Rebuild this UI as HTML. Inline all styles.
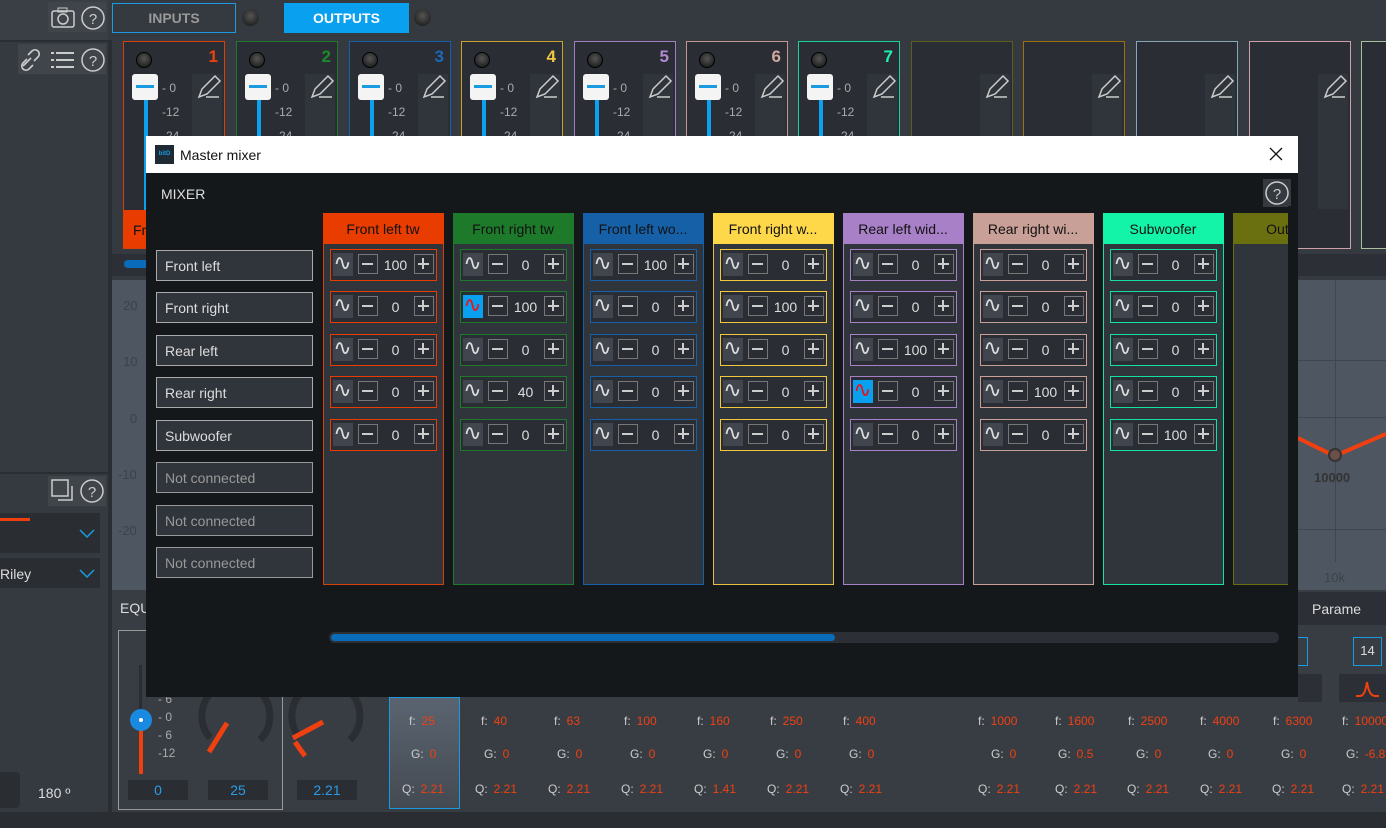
<!DOCTYPE html>
<html><head><meta charset="utf-8">
<style>
*{box-sizing:border-box;margin:0;padding:0}
body{width:1386px;height:828px;overflow:hidden;background:#353a41;font-family:"Liberation Sans",sans-serif;position:relative;color:#ddd}
.a{position:absolute}
.card{position:absolute;top:41px;width:102px;height:208px;border:1.5px solid;background:#2a2e34}
.card .led{position:absolute;left:12px;top:10px;width:16px;height:16px;border-radius:50%;background:radial-gradient(circle at 50% 40%,#555,#111);border:1px solid #000}
.card .num{position:absolute;right:6px;top:5px;font-weight:bold;font-size:17px}
.card .ed{position:absolute;left:68px;top:32px;width:30px;height:135px;background:#30353c}
.card .kn{position:absolute;left:8px;top:32px;width:26px;height:26px;background:#f4f4f4;border-radius:3px}
.card .kn:after{content:"";position:absolute;left:4px;top:11px;width:18px;height:3px;background:#1a9be0}
.card .ln{position:absolute;left:20px;top:58px;width:4px;height:120px;background:#0ea0f0}
.card .sc{position:absolute;left:38px;font-size:12px;color:#aaa}
.dlg{position:absolute;left:146px;top:136px;width:1152px;height:561px;background:#15181b;overflow:hidden}
.tb{position:absolute;left:0;top:0;width:1152px;height:37px;background:#fff;color:#111;font-size:14px}
.col{position:absolute;top:77px;width:121px;height:372px;border:1.5px solid;background:#30343b}
.hd{position:absolute;left:-1.5px;top:-1.5px;width:121px;height:31px;font-size:14px;color:#111;text-align:center;line-height:33px;white-space:nowrap;overflow:hidden}
.c{position:absolute;left:5.5px;width:107px;height:32px;border:1.5px solid;background:#2a2e34}
.c i{position:absolute;left:2px;top:3px;width:20px;height:23px;background:#41464e;color:#ddd;font-style:normal;font-family:"DejaVu Sans",sans-serif;font-size:22px;text-align:center;line-height:22px;overflow:hidden}
.c i.on{background:#0aa0f0;color:#f01010}
.c b{position:absolute;top:4px;width:20px;height:20px;border:1.5px solid #777}
.c b.m{left:27px}.c b.p{left:83px}
.c b:before{content:"";position:absolute;left:3px;top:7.5px;width:11px;height:2px;background:#ccc}
.c b.p:after{content:"";position:absolute;left:7.5px;top:3px;width:2px;height:11px;background:#ccc}
.c span{position:absolute;left:47px;width:36px;top:7px;text-align:center;font-size:14px;color:#ddd}
.lb{position:absolute;left:10px;width:157px;height:31px;border:1.5px solid #aaa;background:#30343b;font-size:14px;padding-left:8px;line-height:31px;color:#ddd}
.lb.n{color:#999;border-color:#999}
.fv{position:absolute;font-size:12px;color:#ccc}
.fv em{font-style:normal;color:#f04010;margin-left:6px}
</style></head><body>

<!-- left panel -->
<div class="a" style="left:0;top:0;width:108px;height:40px;background:#3a3f46"></div>
<div class="a" style="left:48px;top:2px;width:58px;height:30px;background:#40454c"></div>
<svg class="a" style="left:50px;top:5px" width="56" height="26"><rect x="2" y="6" width="22" height="16" rx="2" fill="none" stroke="#ccc" stroke-width="1.5"/><rect x="8" y="3" width="9" height="4" fill="none" stroke="#ccc"/><circle cx="13" cy="14" r="5" fill="none" stroke="#ccc" stroke-width="1.5"/><circle cx="43" cy="13" r="11" fill="none" stroke="#ccc" stroke-width="1.5"/><text x="43" y="19" font-size="15" fill="#ccc" text-anchor="middle" font-family="Liberation Sans">?</text></svg>
<div class="a" style="left:0;top:40px;width:108px;height:2px;background:#2a2e33"></div>
<div class="a" style="left:18px;top:44px;width:88px;height:30px;background:#40454c"></div>
<svg class="a" style="left:18px;top:46px" width="90" height="28"><path d="M5 20l8-8M10 9l4-4a4 4 0 0 1 6 6l-4 4M15 19l-4 4a4 4 0 0 1-6-6l4-4" fill="none" stroke="#ccc" stroke-width="1.6"/><g fill="#ccc"><rect x="33" y="6" width="3" height="2"/><rect x="38" y="6" width="18" height="2"/><rect x="33" y="13" width="3" height="2"/><rect x="38" y="13" width="18" height="2"/><rect x="33" y="20" width="3" height="2"/><rect x="38" y="20" width="18" height="2"/></g><circle cx="75" cy="14" r="11" fill="none" stroke="#ccc" stroke-width="1.5"/><text x="75" y="20" font-size="15" fill="#ccc" text-anchor="middle" font-family="Liberation Sans">?</text></svg>
<div class="a" style="left:0;top:472px;width:108px;height:2px;background:#2a2e33"></div>
<div class="a" style="left:48px;top:476px;width:58px;height:30px;background:#40454c"></div>
<svg class="a" style="left:48px;top:476px" width="58" height="30"><rect x="4" y="4" width="16" height="16" fill="none" stroke="#ccc" stroke-width="1.5"/><path d="M10 24h14V10" fill="none" stroke="#ccc" stroke-width="1.5"/><circle cx="44" cy="15" r="11" fill="none" stroke="#ccc" stroke-width="1.5"/><text x="44" y="21" font-size="15" fill="#ccc" text-anchor="middle" font-family="Liberation Sans">?</text></svg>
<div class="a" style="left:0;top:513px;width:100px;height:40px;background:#2a2e33"></div>
<div class="a" style="left:0;top:518px;width:30px;height:3px;background:#f04010"></div>
<div class="a" style="left:0;top:558px;width:100px;height:30px;background:#2a2e33;font-size:14px;line-height:32px;color:#ddd">Riley</div>
<svg class="a" style="left:78px;top:526px" width="18" height="60"><path d="M2 4l7 7 7-7M2 44l7 7 7-7" fill="none" stroke="#1a9be0" stroke-width="1.5"/></svg>
<div class="a" style="left:0;top:772px;width:20px;height:36px;background:#2a2e33;border-radius:0 4px 4px 0"></div>
<div class="a" style="left:38px;top:785px;font-size:14px;color:#ddd">180 º</div>
<div class="a" style="left:108px;top:40px;width:4px;height:788px;background:#2a2e33"></div>

<!-- top bar -->
<div class="a" style="left:112px;top:3px;width:124px;height:30px;border:1.5px solid #1a9be0;color:#999;font-weight:bold;font-size:14px;text-align:center;line-height:29px">INPUTS</div>
<div class="a" style="left:242px;top:9px;width:17px;height:17px;border-radius:50%;background:radial-gradient(circle at 50% 40%,#555,#111)"></div>
<div class="a" style="left:284px;top:3px;width:125px;height:30px;background:#0aa0f0;color:#fff;font-weight:bold;font-size:14px;text-align:center;line-height:31px">OUTPUTS</div>
<div class="a" style="left:414px;top:9px;width:17px;height:17px;border-radius:50%;background:radial-gradient(circle at 50% 40%,#555,#111)"></div>

<!-- cards -->
<div class="card" style="left:123px;border-color:#d8400a"><div class="led"></div><div class="num" style="color:#f04010">1</div><div class="kn"></div><div class="ln"></div><div class="sc" style="top:39px">- 0</div><div class="sc" style="top:63px">-12</div><div class="sc" style="top:87px">-24</div><div class="ed"></div><div class="a" style="left:-1px;top:168px;width:102px;height:38px;background:#e83c00;color:#111;font-size:14px;padding:12px 0 0 10px">Fr</div></div>
<div class="card" style="left:236px;border-color:#1d7a2a"><div class="led"></div><div class="num" style="color:#1d8a2a">2</div><div class="kn"></div><div class="ln"></div><div class="sc" style="top:39px">- 0</div><div class="sc" style="top:63px">-12</div><div class="sc" style="top:87px">-24</div><div class="ed"></div></div>
<div class="card" style="left:349px;border-color:#1660a8"><div class="led"></div><div class="num" style="color:#1a6ab8">3</div><div class="kn"></div><div class="ln"></div><div class="sc" style="top:39px">- 0</div><div class="sc" style="top:63px">-12</div><div class="sc" style="top:87px">-24</div><div class="ed"></div></div>
<div class="card" style="left:461px;border-color:#c9a227"><div class="led"></div><div class="num" style="color:#f0c840">4</div><div class="kn"></div><div class="ln"></div><div class="sc" style="top:39px">- 0</div><div class="sc" style="top:63px">-12</div><div class="sc" style="top:87px">-24</div><div class="ed"></div></div>
<div class="card" style="left:574px;border-color:#a07cc0"><div class="led"></div><div class="num" style="color:#b088d0">5</div><div class="kn"></div><div class="ln"></div><div class="sc" style="top:39px">- 0</div><div class="sc" style="top:63px">-12</div><div class="sc" style="top:87px">-24</div><div class="ed"></div></div>
<div class="card" style="left:686px;border-color:#c09890"><div class="led"></div><div class="num" style="color:#d0a8a0">6</div><div class="kn"></div><div class="ln"></div><div class="sc" style="top:39px">- 0</div><div class="sc" style="top:63px">-12</div><div class="sc" style="top:87px">-24</div><div class="ed"></div></div>
<div class="card" style="left:798px;border-color:#19d498"><div class="led"></div><div class="num" style="color:#20f0b0">7</div><div class="kn"></div><div class="ln"></div><div class="sc" style="top:39px">- 0</div><div class="sc" style="top:63px">-12</div><div class="sc" style="top:87px">-24</div><div class="ed"></div></div>
<div class="card" style="left:911px;border-color:#5a6018"><div class="ed"></div></div>
<div class="card" style="left:1023px;border-color:#a0700c"><div class="ed"></div></div>
<div class="card" style="left:1136px;border-color:#84a8b8"><div class="ed"></div></div>
<div class="card" style="left:1249px;border-color:#d0a0a8"><div class="ed"></div></div>
<div class="card" style="left:1361px;border-color:#a8c0a0"><div class="ed"></div></div>
<svg class="a" style="left:0;top:70px" width="1386" height="32"><g fill="none" stroke="#ccc" stroke-width="1.5"><path id="pe" d="M199 27l3-8 13-13 5 5-13 13-8 3zM206 27h13"/><use href="#pe" x="113"/><use href="#pe" x="225"/><use href="#pe" x="338"/><use href="#pe" x="451"/><use href="#pe" x="563"/><use href="#pe" x="675"/><use href="#pe" x="788"/><use href="#pe" x="900"/><use href="#pe" x="1013"/><use href="#pe" x="1126"/></g></svg>
<div class="a" style="left:112px;top:254px;width:1274px;height:22px;background:#2c3036"></div>
<div class="a" style="left:124px;top:260px;width:40px;height:8px;border-radius:4px;background:#0a6cb8"></div>

<!-- graph -->
<div class="a" style="left:112px;top:280px;width:1274px;height:310px;background:#4e5761"></div>
<div class="a" style="left:1298px;top:360px;width:88px;height:1px;background:#3e464f"></div>
<div class="a" style="left:1298px;top:417px;width:88px;height:1px;background:#3e464f"></div>
<div class="a" style="left:1298px;top:529px;width:88px;height:1px;background:#3e464f"></div>
<div class="a" style="left:1335px;top:280px;width:1px;height:282px;background:#3e464f"></div>
<svg class="a" style="left:1298px;top:420px" width="88" height="60"><path d="M0 18Q20 28 37 36Q55 28 88 14" fill="none" stroke="#f04010" stroke-width="4"/><circle cx="37" cy="35" r="6" fill="#6a5048" stroke="#333" stroke-width="2"/></svg>
<div class="a" style="left:1314px;top:470px;font-size:13px;font-weight:bold;color:#333">10000</div>
<div class="a" style="left:1324px;top:570px;font-size:13px;color:#3a424a">10k</div>
<div class="a" style="left:123px;top:298px;font-size:13px;color:#3a424a">20</div>
<div class="a" style="left:123px;top:354px;font-size:13px;color:#3a424a">10</div>
<div class="a" style="left:130px;top:411px;font-size:13px;color:#3a424a">0</div>
<div class="a" style="left:118px;top:467px;font-size:13px;color:#3a424a">-10</div>
<div class="a" style="left:118px;top:523px;font-size:13px;color:#3a424a">-20</div>

<!-- bottom eq -->
<div class="a" style="left:112px;top:590px;width:1274px;height:222px;background:#383d44"></div>
<div class="a" style="left:120px;top:600px;font-size:14px;color:#ddd">EQU</div>
<div class="a" style="left:1298px;top:592px;width:88px;height:33px;background:#2c3036;font-size:14px;color:#ddd;padding:9px 0 0 14px">Parame</div>
<div class="a" style="left:118px;top:630px;width:165px;height:180px;border:1.5px solid #999"></div>
<div class="a" style="left:139px;top:665px;width:3px;height:108px;background:#2a2e33"></div>
<div class="a" style="left:139px;top:728px;width:4px;height:46px;background:#f04010"></div>
<div class="a" style="left:130px;top:709px;width:22px;height:22px;border-radius:50%;background:#1a8ae0"></div>
<div class="a" style="left:139px;top:718px;width:4px;height:4px;background:#fff;border-radius:50%"></div>
<div class="a" style="left:158px;top:690px;font-size:12px;color:#aaa;line-height:18px">- 6<br>- 0<br>- 6<br>-12</div>
<svg class="a" style="left:195px;top:690px" width="180" height="80"><path d="M15 48A34 34 0 1 1 65 50M105 48A34 34 0 1 1 155 50" fill="none" stroke="#2a2e33" stroke-width="7"/><path d="M14 62L32 33" stroke="#f04010" stroke-width="5"/><path d="M98 48L128 32M100 52L110 66" stroke="#f04010" stroke-width="5"/></svg>
<div class="a" style="left:128px;top:780px;width:60px;height:20px;background:#2a2e33;color:#2a9be8;font-size:14px;text-align:center;line-height:20px">0</div>
<div class="a" style="left:208px;top:780px;width:60px;height:20px;background:#2a2e33;color:#2a9be8;font-size:14px;text-align:center;line-height:20px">25</div>
<div class="a" style="left:297px;top:780px;width:60px;height:20px;background:#2a2e33;color:#2a9be8;font-size:14px;text-align:center;line-height:20px">2.21</div>
<div class="a" style="left:389px;top:697px;width:71px;height:112px;border:1.5px solid #1a9be0;background:linear-gradient(#5a6470,#444a52)"></div>
<div class="a" style="left:1353px;top:637px;width:29px;height:29px;border:1.5px solid #1a9be0;font-size:13px;color:#ddd;text-align:center;line-height:26px">14</div>
<div class="a" style="left:1290px;top:637px;width:18px;height:29px;border:1.5px solid #1a9be0;border-left:none"></div>
<div class="a" style="left:1339px;top:674px;width:47px;height:28px;background:#2c3036"></div>
<div class="a" style="left:1298px;top:674px;width:24px;height:28px;background:#2c3036"></div>
<svg class="a" style="left:1355px;top:678px" width="30" height="22"><path d="M1 18h4Q10 18 12 4Q14 18 20 18h4" fill="none" stroke="#f04010" stroke-width="2"/></svg>
<div class="fv" style="left:409px;top:714px">f:<em>25</em></div><div class="fv" style="left:411px;top:747px">G:<em>0</em></div><div class="fv" style="left:402px;top:782px">Q:<em>2.21</em></div>
<div class="fv" style="left:481px;top:714px">f:<em>40</em></div><div class="fv" style="left:484px;top:747px">G:<em>0</em></div><div class="fv" style="left:475px;top:782px">Q:<em>2.21</em></div>
<div class="fv" style="left:554px;top:714px">f:<em>63</em></div><div class="fv" style="left:557px;top:747px">G:<em>0</em></div><div class="fv" style="left:548px;top:782px">Q:<em>2.21</em></div>
<div class="fv" style="left:624px;top:714px">f:<em>100</em></div><div class="fv" style="left:630px;top:747px">G:<em>0</em></div><div class="fv" style="left:621px;top:782px">Q:<em>2.21</em></div>
<div class="fv" style="left:697px;top:714px">f:<em>160</em></div><div class="fv" style="left:703px;top:747px">G:<em>0</em></div><div class="fv" style="left:694px;top:782px">Q:<em>1.41</em></div>
<div class="fv" style="left:770px;top:714px">f:<em>250</em></div><div class="fv" style="left:776px;top:747px">G:<em>0</em></div><div class="fv" style="left:767px;top:782px">Q:<em>2.21</em></div>
<div class="fv" style="left:843px;top:714px">f:<em>400</em></div><div class="fv" style="left:849px;top:747px">G:<em>0</em></div><div class="fv" style="left:840px;top:782px">Q:<em>2.21</em></div>
<div class="fv" style="left:978px;top:714px">f:<em>1000</em></div><div class="fv" style="left:991px;top:747px">G:<em>0</em></div><div class="fv" style="left:978px;top:782px">Q:<em>2.21</em></div>
<div class="fv" style="left:1055px;top:714px">f:<em>1600</em></div><div class="fv" style="left:1058px;top:747px">G:<em>0.5</em></div><div class="fv" style="left:1055px;top:782px">Q:<em>2.21</em></div>
<div class="fv" style="left:1128px;top:714px">f:<em>2500</em></div><div class="fv" style="left:1136px;top:747px">G:<em>0</em></div><div class="fv" style="left:1127px;top:782px">Q:<em>2.21</em></div>
<div class="fv" style="left:1200px;top:714px">f:<em>4000</em></div><div class="fv" style="left:1208px;top:747px">G:<em>0</em></div><div class="fv" style="left:1200px;top:782px">Q:<em>2.21</em></div>
<div class="fv" style="left:1273px;top:714px">f:<em>6300</em></div><div class="fv" style="left:1281px;top:747px">G:<em>0</em></div><div class="fv" style="left:1272px;top:782px">Q:<em>2.21</em></div>
<div class="fv" style="left:1342px;top:714px">f:<em>10000</em></div><div class="fv" style="left:1346px;top:747px">G:<em>-6.8</em></div><div class="fv" style="left:1342px;top:782px">Q:<em>2.21</em></div>
<div class="a" style="left:0;top:812px;width:1386px;height:16px;background:#2a2e33"></div>

<!-- dialog -->
<div class="dlg">
<div class="tb"><div class="a" style="left:9px;top:9px;width:19px;height:19px;background:#1e2a34;color:#1a9be0;font-size:6px;font-weight:bold;line-height:19px;text-align:center">bitD</div><div class="a" style="left:34px;top:11px">Master mixer</div>
<svg class="a" style="left:1123px;top:11px" width="14" height="14"><path d="M1 1l12 12M13 1L1 13" stroke="#111" stroke-width="1.3"/></svg></div>
<div class="a" style="left:15px;top:50px;font-size:14px;color:#ddd">MIXER</div>
<div class="a" style="left:1117px;top:43px;width:28px;height:28px;background:#343a40"></div>
<svg class="a" style="left:1117px;top:43px" width="28" height="28"><circle cx="14" cy="14" r="11" fill="none" stroke="#ccc" stroke-width="1.5"/><text x="14" y="20" font-size="15" fill="#ccc" text-anchor="middle" font-family="Liberation Sans">?</text></svg>

<div class="lb" style="top:114px">Front left</div>
<div class="lb" style="top:156px">Front right</div>
<div class="lb" style="top:199px">Rear left</div>
<div class="lb" style="top:241px">Rear right</div>
<div class="lb" style="top:284px">Subwoofer</div>
<div class="lb n" style="top:326px">Not connected</div>
<div class="lb n" style="top:369px">Not connected</div>
<div class="lb n" style="top:411px">Not connected</div>

<div class="col" style="left:177px;border-color:#d8400a"><div class="hd" style="background:#e83c00">Front left tw</div>
<div class="c" style="top:35px;border-color:#e83c00"><i>∿</i><b class="m"></b><span>100</span><b class="p"></b></div>
<div class="c" style="top:77px;border-color:#e83c00"><i>∿</i><b class="m"></b><span>0</span><b class="p"></b></div>
<div class="c" style="top:120px;border-color:#e83c00"><i>∿</i><b class="m"></b><span>0</span><b class="p"></b></div>
<div class="c" style="top:162px;border-color:#e83c00"><i>∿</i><b class="m"></b><span>0</span><b class="p"></b></div>
<div class="c" style="top:205px;border-color:#e83c00"><i>∿</i><b class="m"></b><span>0</span><b class="p"></b></div></div>

<div class="col" style="left:307px;border-color:#1d7a2a"><div class="hd" style="background:#1d7a2a">Front right tw</div>
<div class="c" style="top:35px;border-color:#1d7a2a"><i>∿</i><b class="m"></b><span>0</span><b class="p"></b></div>
<div class="c" style="top:77px;border-color:#1d7a2a"><i class="on">∿</i><b class="m"></b><span>100</span><b class="p"></b></div>
<div class="c" style="top:120px;border-color:#1d7a2a"><i>∿</i><b class="m"></b><span>0</span><b class="p"></b></div>
<div class="c" style="top:162px;border-color:#1d7a2a"><i>∿</i><b class="m"></b><span>40</span><b class="p"></b></div>
<div class="c" style="top:205px;border-color:#1d7a2a"><i>∿</i><b class="m"></b><span>0</span><b class="p"></b></div></div>

<div class="col" style="left:437px;border-color:#1660a8"><div class="hd" style="background:#1660a8">Front left wo...</div>
<div class="c" style="top:35px;border-color:#1660a8"><i>∿</i><b class="m"></b><span>100</span><b class="p"></b></div>
<div class="c" style="top:77px;border-color:#1660a8"><i>∿</i><b class="m"></b><span>0</span><b class="p"></b></div>
<div class="c" style="top:120px;border-color:#1660a8"><i>∿</i><b class="m"></b><span>0</span><b class="p"></b></div>
<div class="c" style="top:162px;border-color:#1660a8"><i>∿</i><b class="m"></b><span>0</span><b class="p"></b></div>
<div class="c" style="top:205px;border-color:#1660a8"><i>∿</i><b class="m"></b><span>0</span><b class="p"></b></div></div>

<div class="col" style="left:567px;border-color:#e8c040"><div class="hd" style="background:#ffd84a">Front right w...</div>
<div class="c" style="top:35px;border-color:#f0c840"><i>∿</i><b class="m"></b><span>0</span><b class="p"></b></div>
<div class="c" style="top:77px;border-color:#f0c840"><i>∿</i><b class="m"></b><span>100</span><b class="p"></b></div>
<div class="c" style="top:120px;border-color:#f0c840"><i>∿</i><b class="m"></b><span>0</span><b class="p"></b></div>
<div class="c" style="top:162px;border-color:#f0c840"><i>∿</i><b class="m"></b><span>0</span><b class="p"></b></div>
<div class="c" style="top:205px;border-color:#f0c840"><i>∿</i><b class="m"></b><span>0</span><b class="p"></b></div></div>

<div class="col" style="left:697px;border-color:#a880c8"><div class="hd" style="background:#a880c8">Rear left wid...</div>
<div class="c" style="top:35px;border-color:#a880c8"><i>∿</i><b class="m"></b><span>0</span><b class="p"></b></div>
<div class="c" style="top:77px;border-color:#a880c8"><i>∿</i><b class="m"></b><span>0</span><b class="p"></b></div>
<div class="c" style="top:120px;border-color:#a880c8"><i>∿</i><b class="m"></b><span>100</span><b class="p"></b></div>
<div class="c" style="top:162px;border-color:#a880c8"><i class="on">∿</i><b class="m"></b><span>0</span><b class="p"></b></div>
<div class="c" style="top:205px;border-color:#a880c8"><i>∿</i><b class="m"></b><span>0</span><b class="p"></b></div></div>

<div class="col" style="left:827px;border-color:#c8a098"><div class="hd" style="background:#c8a098">Rear right wi...</div>
<div class="c" style="top:35px;border-color:#c8a098"><i>∿</i><b class="m"></b><span>0</span><b class="p"></b></div>
<div class="c" style="top:77px;border-color:#c8a098"><i>∿</i><b class="m"></b><span>0</span><b class="p"></b></div>
<div class="c" style="top:120px;border-color:#c8a098"><i>∿</i><b class="m"></b><span>0</span><b class="p"></b></div>
<div class="c" style="top:162px;border-color:#c8a098"><i>∿</i><b class="m"></b><span>100</span><b class="p"></b></div>
<div class="c" style="top:205px;border-color:#c8a098"><i>∿</i><b class="m"></b><span>0</span><b class="p"></b></div></div>

<div class="col" style="left:957px;border-color:#14e0a0"><div class="hd" style="background:#14f4a8">Subwoofer</div>
<div class="c" style="top:35px;border-color:#14e0a0"><i>∿</i><b class="m"></b><span>0</span><b class="p"></b></div>
<div class="c" style="top:77px;border-color:#14e0a0"><i>∿</i><b class="m"></b><span>0</span><b class="p"></b></div>
<div class="c" style="top:120px;border-color:#14e0a0"><i>∿</i><b class="m"></b><span>0</span><b class="p"></b></div>
<div class="c" style="top:162px;border-color:#14e0a0"><i>∿</i><b class="m"></b><span>0</span><b class="p"></b></div>
<div class="c" style="top:205px;border-color:#14e0a0"><i>∿</i><b class="m"></b><span>100</span><b class="p"></b></div></div>

<div class="col" style="left:1087px;border-color:#6a7010"><div class="hd" style="background:#6a7010">Output 8</div></div>
<div class="a" style="left:1142px;top:70px;width:10px;height:460px;background:#15181b"></div>

<div class="a" style="left:183px;top:496px;width:950px;height:11px;border-radius:6px;background:#2c3036"></div>
<div class="a" style="left:185px;top:498px;width:504px;height:7px;border-radius:4px;background:#0a6cb8"></div>
</div>
</body></html>
